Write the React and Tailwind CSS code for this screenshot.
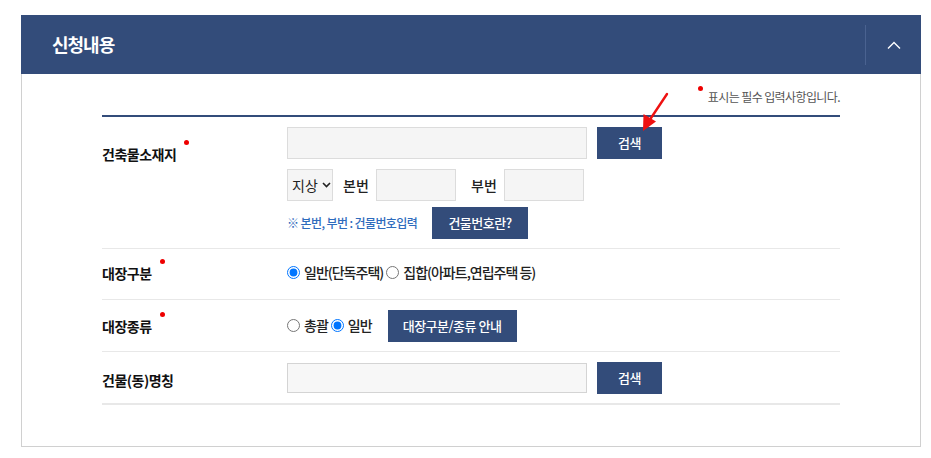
import React from "react";

function Req({ children }) {
  return (
    <span className="relative inline-block">
      {children}
      <span className="absolute -right-[13px] -top-[4px] w-[5px] h-[5px] rounded-full bg-[#ee0000]"></span>
    </span>
  );
}

function Row({ label, children, className = "" }) {
  return (
    <div className={"flex border-b border-[#e8e8e8] " + className}>
      <div className="w-[185px] shrink-0 text-[14px] font-semibold text-[#111] tracking-[-0.5px]">{label}</div>
      <div className="flex-1">{children}</div>
    </div>
  );
}

function Btn({ children, className = "" }) {
  return (
    <button className={"bg-[#334c7a] text-white text-[13px] font-medium h-[32px] tracking-[-0.5px] " + className}>
      {children}
    </button>
  );
}

function Radio({ name, checked, label }) {
  return (
    <label className="inline-flex items-center gap-[4px]">
      <input type="radio" name={name} defaultChecked={checked} className="m-0 w-[13px] h-[13px]" />
      <span className="tracking-[-1px]">{label}</span>
    </label>
  );
}

export default function App() {
  return (
    <div
      className="relative min-h-[458px] bg-white pt-[15px] pl-[21px] pr-[10px]"
      style={{ fontFamily: '"Noto Sans CJK KR", "Noto Sans", sans-serif' }}
    >
      <div className="w-[900px]">
        <div className="h-[59px] bg-[#334c7a] flex items-center">
          <h2 className="pl-[31px] text-white text-[18px] font-bold tracking-[-1px] flex-1">신청내용</h2>
          <div className="w-px h-[40px] bg-[#4a6290]"></div>
          <div className="w-[55px] flex justify-center">
            <svg width="16" height="10" viewBox="0 0 16 10" fill="none">
              <path d="M2 8.5 L8 2.5 L14 8.5" stroke="white" strokeWidth="1.4" />
            </svg>
          </div>
        </div>
        <div className="border border-t-0 border-[#d0d0d0] px-[80px] pt-[10px] pb-[41px]">
          <div className="flex justify-end items-start h-[31px]">
            <span className="relative text-[12px] text-[#555] tracking-[-0.6px] pt-[4px]">
              <span className="absolute -left-[10px] top-[2px] w-[5px] h-[5px] rounded-full bg-[#ee0000]"></span>
              표시는 필수 입력사항입니다.
            </span>
          </div>
          <div className="border-t-2 border-[#334c7a]">
            <Row label={<div className="pt-[17px]"><Req>건축물소재지</Req></div>} className="pt-[10px] pb-[9px]">
              <div className="flex gap-[10px]">
                <input className="w-[300px] h-[32px] bg-[#f5f5f5] border border-[#dcdcdc]" />
                <Btn className="w-[65px]">검색</Btn>
              </div>
              <div className="flex items-center mt-[10px] text-[14px] text-[#222] font-medium">
                <div className="w-[46px] h-[32px] bg-[#f5f5f5] border border-[#dcdcdc] flex items-center pl-[4px] gap-[4px]">
                  <span className="font-normal">지상</span>
                  <svg width="9" height="6" viewBox="0 0 9 6"><path d="M1 1 L4.5 4.5 L8 1" stroke="#222" strokeWidth="1.6" fill="none" /></svg>
                </div>
                <span className="ml-[10px] w-[33px]">본번</span>
                <input className="w-[80px] h-[32px] bg-[#f5f5f5] border border-[#dcdcdc]" />
                <span className="ml-[15px] w-[33px]">부번</span>
                <input className="w-[80px] h-[32px] bg-[#f5f5f5] border border-[#dcdcdc]" />
              </div>
              <div className="flex items-center mt-[6px]">
                <span className="text-[12px] font-medium text-[#2f6cbd] tracking-[-0.6px] w-[145px]">※ 본번, 부번 : 건물번호입력</span>
                <Btn className="w-[96px] h-[30px] text-[12px]">건물번호란?</Btn>
              </div>
            </Row>
            <Row label={<div className="pt-[14px]"><Req>대장구분</Req></div>} className="h-[51px]">
              <div className="flex items-center gap-[3px] h-full text-[14px] font-medium text-[#222] -mt-[2px]">
                <Radio name="g" checked label="일반(단독주택)" />
                <Radio name="g" label="집합(아파트,연립주택 등)" />
              </div>
            </Row>
            <Row label={<div className="pt-[16px]"><Req>대장종류</Req></div>} className="h-[52px]">
              <div className="flex items-center gap-[3px] h-full text-[14px] font-medium text-[#222]">
                <Radio name="k" label="총괄" />
                <Radio name="k" checked label="일반" />
                <Btn className="ml-[13px] w-[129px] h-[29px] text-[12px]">대장구분/종류 안내</Btn>
              </div>
            </Row>
            <Row label={<div className="pt-[18px]">건물(동)명칭</div>} className="h-[53px] border-b-2">
              <div className="flex items-center gap-[10px] h-full">
                <input className="w-[300px] h-[30px] bg-[#f7f7f7] border border-[#d4d4d4]" />
                <Btn className="w-[65px] h-[31px]">검색</Btn>
              </div>
            </Row>
          </div>
        </div>
      </div>
      <svg className="absolute left-[636px] top-[88px]" width="40" height="48" viewBox="0 0 40 48">
        <path d="M31 6 L13 33" stroke="#ee1111" strokeWidth="2.4" strokeLinecap="round" />
        <path d="M7 43 L7.5 26 L20 33.5 Z" fill="#ee1111" />
      </svg>
    </div>
  );
}
